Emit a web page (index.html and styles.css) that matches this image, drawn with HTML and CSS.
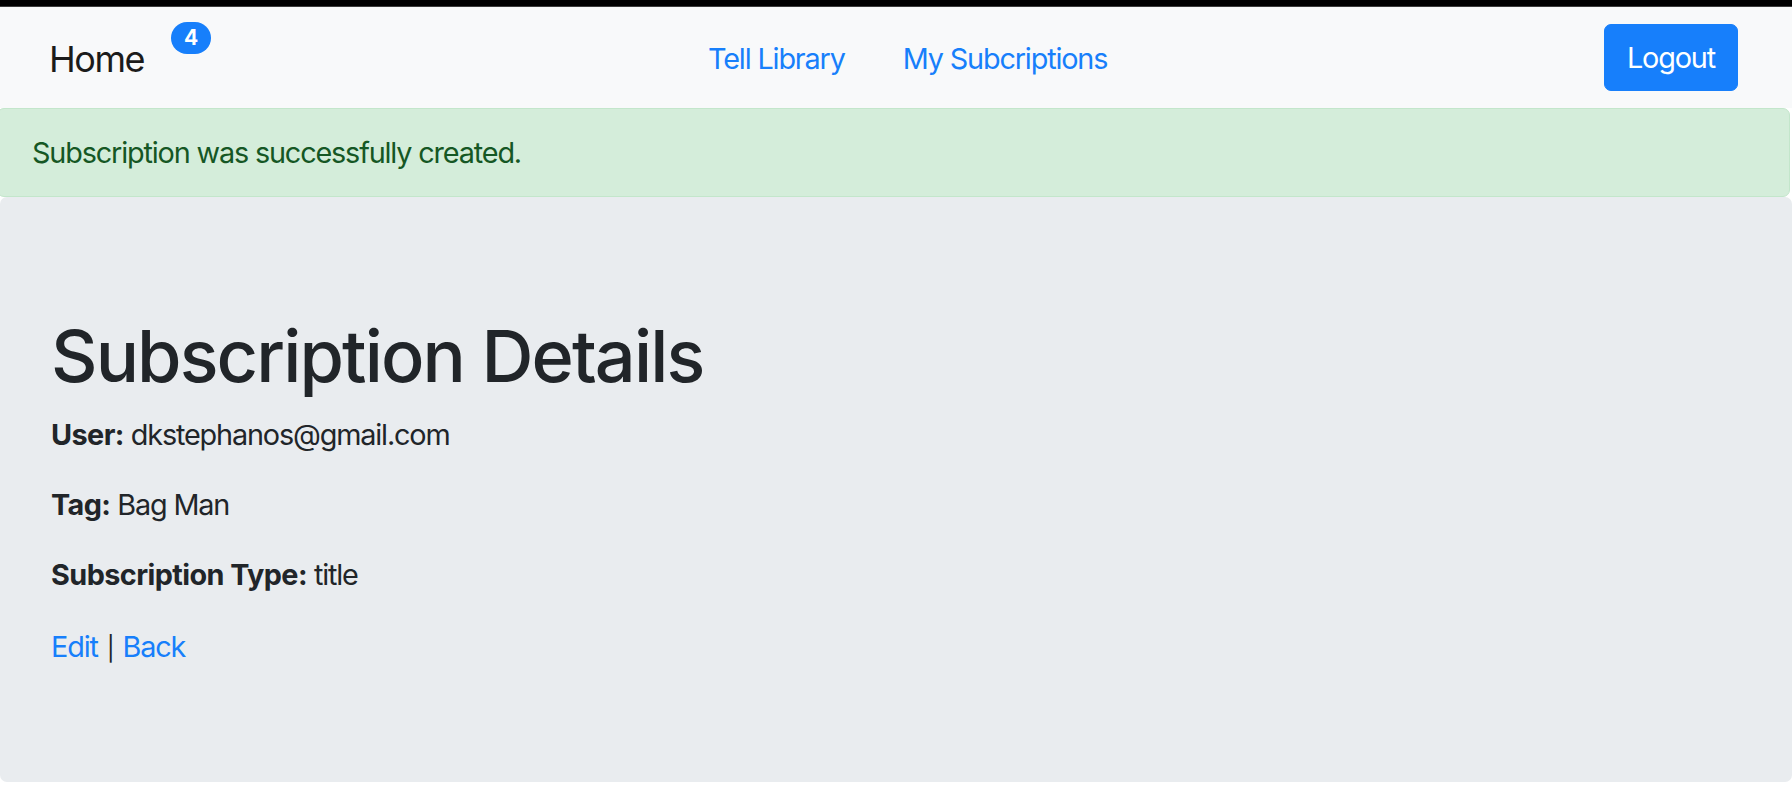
FILE: index.html
```html
<!DOCTYPE html>
<html lang="en">
<head>
<meta charset="utf-8">
<title>Subscription Details</title>
<link rel="stylesheet" href="styles.css">
</head>
<body>
<div class="page">
  <div class="topbar"></div>
  <nav class="navbar">
    <a class="brand" href="#">Home</a>
    <span class="badge">4</span>
    <ul class="nav-links">
      <li><a class="nav-link" href="#">Tell Library</a></li>
      <li><a class="nav-link" href="#">My Subcriptions</a></li>
    </ul>
    <a class="btn" href="#">Logout</a>
  </nav>
  <div class="alert">Subscription was successfully created.</div>
  <main class="jumbotron">
    <h1 class="title">Subscription Details</h1>
    <p class="row"><strong>User:</strong> dkstephanos@gmail.com</p>
    <p class="row"><strong>Tag:</strong> Bag Man</p>
    <p class="row"><strong>Subscription Type:</strong> title</p>
    <p class="row actions"><a class="link" href="#">Edit</a> <span class="pipe">|</span> <a class="link" href="#">Back</a></p>
  </main>
</div>
</body>
</html>
```
FILE: styles.css
```css
* { box-sizing: border-box; }
html, body { margin: 0; padding: 0; background: #ffffff; }
body {
  font-family: Inter, "Liberation Sans", Arial, sans-serif;
  color: #212529;
  font-size: 28.8px;
  letter-spacing: -0.04em;
}
.page {
  display: flex;
  flex-direction: column;
  height: 788px;
}
.topbar {
  height: 7px;
  background: #000;
  border-bottom: 1px solid #3c3c3c;
}
.navbar {
  height: 101px;
  background: #f8f9fa;
  display: flex;
  align-items: center;
  padding: 2px 54px 0 49px;
}
.brand {
  font-size: 36px;
  line-height: 54px;
  color: #1b1b1b;
  text-decoration: none;
  margin-right: 27px;
  letter-spacing: -0.04em;
}
.badge {
  align-self: flex-start;
  margin-top: 13px;
  background: #177ffb;
  color: #fff;
  font-weight: 700;
  font-size: 21px;
  line-height: 32px;
  height: 32px;
  padding: 0 13px;
  border-radius: 16px;
  letter-spacing: 0;
}
.nav-links {
  list-style: none;
  margin: 0 auto;
  padding: 0;
  display: flex;
}
.nav-link {
  display: block;
  padding: 0 29px;
  line-height: 43px;
  color: #177ffb;
  text-decoration: none;
}
.btn {
  display: block;
  margin-top: -2px;
  background: #177ffb;
  border: 1px solid #177ffb;
  color: #fff;
  text-decoration: none;
  line-height: 43.2px;
  padding: 11.4px 22px;
  border-radius: 7px;
}
.alert {
  margin: 0 2px 0 -3px;
  height: 89px;
  display: flex;
  align-items: center;
  padding: 0 34px;
  background: #d4edda;
  border: 1px solid #c3e6cb;
  border-radius: 7px;
  color: #155724;
}
.jumbotron {
  flex: 1;
  margin-bottom: 6px;
  background: #e9ecef;
  border-radius: 7px;
  padding: 116px 51px 0;
}
.title {
  margin: 0 0 14.4px;
  font-size: 72px;
  font-weight: 500;
  line-height: 86.4px;
  letter-spacing: -0.026em;
}
.row {
  margin: 0 0 28px;
  line-height: 42px;
}
.row strong {
  font-weight: 700;
  letter-spacing: -0.02em;
}
.actions {
  margin-top: 30px;
  word-spacing: 2px;
}
.link {
  color: #177ffb;
  text-decoration: none;
}
.pipe {
  font-size: 24px;
}
```
